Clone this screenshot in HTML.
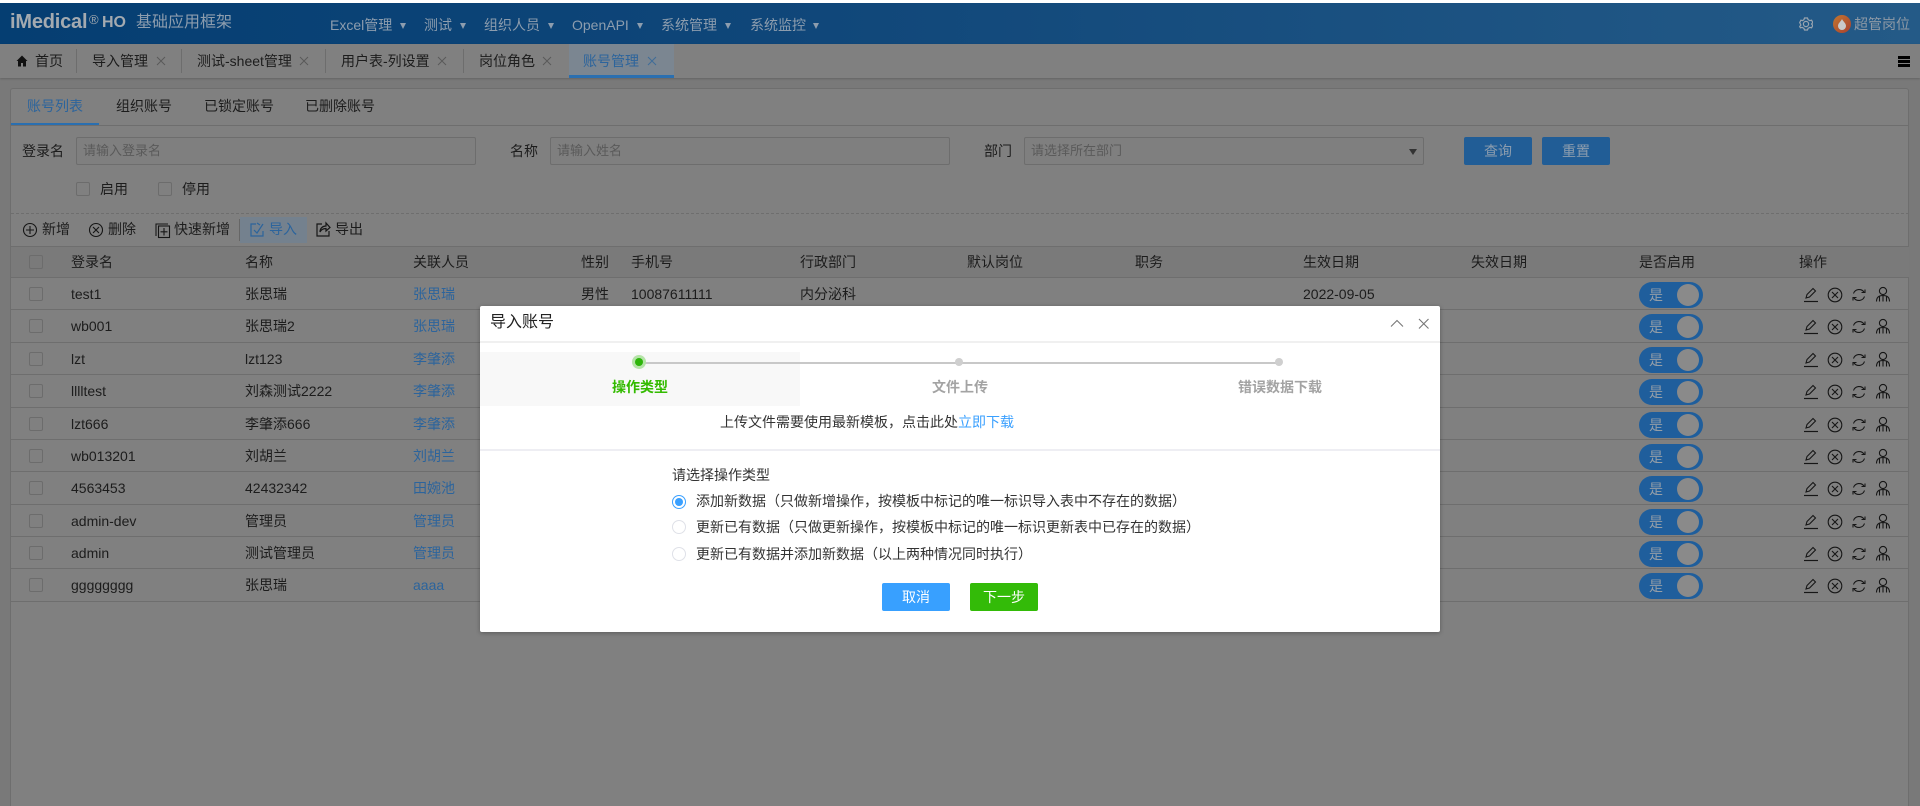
<!DOCTYPE html>
<html lang="zh-CN">
<head>
<meta charset="utf-8">
<title>导入账号</title>
<style>
*{box-sizing:border-box}
html,body{margin:0;padding:0;width:1920px;height:806px;overflow:hidden;background:#797979}
body{position:relative;font:14px/20px "Liberation Sans","Noto Sans CJK SC",sans-serif;color:#1c1c1c}
.t{position:absolute;white-space:nowrap;line-height:20px}
.a{position:absolute}
.strip{position:absolute;left:0;top:0;width:1920px;height:3px;background:#fff}
.top{position:absolute;left:0;top:3px;width:1920px;height:41px;background:linear-gradient(90deg,#053e72 0%,#0f4679 40%,#245a87 100%)}
.m{color:#8d9dae}
.ar{position:absolute;top:23px;width:0;height:0;border-left:3.500px solid transparent;border-right:3.500px solid transparent;border-top:6px solid #8d9dae}
.tabs{position:absolute;left:0;top:44px;width:1920px;height:34px;background:#808080;box-shadow:0 1px 2px rgba(0,0,0,.18)}
.sep{position:absolute;top:5px;width:1px;height:24px;background:#6d6d6d}
.xi{position:absolute;top:12px}
.card{position:absolute;left:10px;top:88px;width:1899px;height:730px;background:#808080;border:1px solid #6e6e6e;border-radius:3px}
.inp{position:absolute;top:137px;height:28px;border:1px solid #6d6d6d;border-radius:2px;background:#7f7f7f;color:#5a5a5a;padding-left:6px;line-height:26px;font-size:13px;white-space:nowrap}
.btn{position:absolute;top:137px;width:68px;height:28px;background:#215d96;border-radius:2px;color:#8d9dae;text-align:center;line-height:28px}
.cb{position:absolute;width:14px;height:14px;border:1px solid #6c6c6c;border-radius:2px}
.row{position:absolute;left:11px;width:1898px;height:33px;border-top:1px solid #6e6e6e;line-height:32px}
.row>span{position:absolute;top:0;white-space:nowrap}
.row>i{position:absolute;left:18px;top:9px;width:14px;height:14px;border:1px solid #6c6c6c;border-radius:2px}
.l{color:#2c649c}
.sw{position:absolute;left:1628px;top:4px;width:64px;height:26px;border-radius:13px;background:#1f5e9c;color:#949ea8;line-height:26px;padding-left:10px}
.sw:after{content:"";position:absolute;left:38px;top:2px;width:22px;height:22px;border-radius:50%;background:#8a8a8a}
.ops{position:absolute;left:1775px;top:6px}
.modal{position:absolute;left:480px;top:306px;width:960px;height:326px;background:#fff;border-radius:2px;box-shadow:0 1px 5px rgba(0,0,0,.3);color:#333}
.modal .t{color:#333}
.rd{position:absolute;left:192px;width:14px;height:14px;border-radius:50%;border:1px solid #dfe1e8;background:#fff}
</style>
</head>
<body>
<svg width="0" height="0" style="position:absolute">
<symbol id="acts" viewBox="0 0 110 22">
<g fill="none" stroke="#161616" stroke-width="1.1">
<path d="M20 14l1-3.500 6-6 2.500 2.500-6 6z"/><path d="M18 17.500h14" stroke-width="1.200"/>
<circle cx="49" cy="11" r="6.800"/><path d="M46 8l6 6M52 8l-6 6"/>
<path d="M67.500 9.500a6 6 0 0 1 10.500-1.500M78.500 12.500a6 6 0 0 1-10.500 1.500"/><path d="M75.500 8.500h3.500v-3M70.500 13.500h-3.500v3"/>
<circle cx="97" cy="7" r="3.600"/><path d="M90.500 17.500c0-4.500 2.500-6 6.500-6s6.500 1.500 6.500 6M93.500 12.500v5M97 11.500v6M100.500 12.500v5"/>
</g></symbol>
<symbol id="xx" viewBox="0 0 10 10"><path d="M1 1l8 8M9 1l-8 8" fill="none" stroke="currentColor" stroke-width="1"/></symbol>
</svg>

<div class="strip"></div>
<div class="top"></div>
<div class="t" style="left:10px;top:12px;font-size:20px;font-weight:bold;color:#a4aab0;letter-spacing:-.2px">iMedical</div>
<div class="t" style="left:89px;top:10px;font-size:13px;color:#a4aab0">®</div>
<div class="t" style="left:102px;top:13px;font-size:16px;font-weight:bold;color:#a4aab0">HO</div>
<div class="t" style="left:136px;top:13px;font-size:16px;color:#8d9dae">基础应用框架</div>
<div class="t m" style="left:330px;top:15px">Excel管理</div><div class="ar" style="left:400px"></div>
<div class="t m" style="left:424px;top:15px">测试</div><div class="ar" style="left:460px"></div>
<div class="t m" style="left:484px;top:15px">组织人员</div><div class="ar" style="left:548px"></div>
<div class="t m" style="left:572px;top:15px">OpenAPI</div><div class="ar" style="left:637px"></div>
<div class="t m" style="left:661px;top:15px">系统管理</div><div class="ar" style="left:725px"></div>
<div class="t m" style="left:750px;top:15px">系统监控</div><div class="ar" style="left:813px"></div>
<svg class="a" style="left:1799px;top:17px" width="14" height="14" viewBox="0 0 14 14" fill="none" stroke="#9aa5b0" stroke-width="1.200"><path d="M5.500 1h3l.6 1.700 1.800.9 1.700-.4 1.200 2.300-1.200 1.500 1.200 1.500-1.200 2.300-1.700-.4-1.800.9-.6 1.700h-3l-.6-1.700-1.800-.9-1.700.4L.7 9.500 1.900 8 .7 5.500l1.200-2.300 1.700.4 1.300-.9z"/><circle cx="7" cy="7" r="2.600"/></svg>
<div class="a" style="left:1833px;top:15px;width:18px;height:18px;border-radius:50%;background:linear-gradient(135deg,#c2762f,#a9402f)"></div>
<svg class="a" style="left:1836px;top:18px" width="12" height="12" viewBox="0 0 12 12"><path d="M6 1c1 2.500 4 4 4 7a4 4 0 0 1-8 0c0-3 3-4.500 4-7z" fill="#c9c9c9"/></svg>
<div class="t" style="left:1854px;top:14px;color:#8f9aa6">超管岗位</div>

<div class="tabs">
<svg class="a" style="left:16px;top:11px" width="12" height="12" viewBox="0 0 12 12"><path d="M6 .5L.5 6H2v5.500h3V8h2v3.500h3V6h1.500z" fill="#111"/></svg>
<div class="t" style="left:35px;top:7px">首页</div><div class="sep" style="left:76px"></div>
<div class="t" style="left:92px;top:7px">导入管理</div><svg class="xi" style="left:156px;color:#5a5a5a" width="10" height="10"><use href="#xx"/></svg><div class="sep" style="left:181px"></div>
<div class="t" style="left:197px;top:7px">测试-sheet管理</div><svg class="xi" style="left:299px;color:#5a5a5a" width="10" height="10"><use href="#xx"/></svg><div class="sep" style="left:325px"></div>
<div class="t" style="left:341px;top:7px">用户表-列设置</div><svg class="xi" style="left:437px;color:#5a5a5a" width="10" height="10"><use href="#xx"/></svg><div class="sep" style="left:463px"></div>
<div class="t" style="left:479px;top:7px">岗位角色</div><svg class="xi" style="left:542px;color:#5a5a5a" width="10" height="10"><use href="#xx"/></svg>
<div class="a" style="left:569px;top:0;width:105px;height:34px;background:#7b8691;border-bottom:3px solid #2a6fb0"></div>
<div class="t" style="left:583px;top:7px;color:#2c649c">账号管理</div><svg class="xi" style="left:647px;color:#3f6d99" width="10" height="10"><use href="#xx"/></svg>
<div class="a" style="left:1898px;top:12px;width:12px;height:2.500px;background:#000"></div>
<div class="a" style="left:1898px;top:16px;width:12px;height:2.500px;background:#000"></div>
<div class="a" style="left:1898px;top:20px;width:12px;height:2.500px;background:#000"></div>
</div>

<div class="card"></div>
<div class="a" style="left:11px;top:125px;width:1898px;height:1px;background:#6e6e6e"></div>
<div class="a" style="left:11px;top:123px;width:88px;height:2px;background:#2a6fb0"></div>
<div class="t" style="left:27px;top:96px;color:#2c649c">账号列表</div>
<div class="t" style="left:116px;top:96px">组织账号</div>
<div class="t" style="left:204px;top:96px">已锁定账号</div>
<div class="t" style="left:305px;top:96px">已删除账号</div>

<div class="t" style="left:22px;top:141px">登录名</div>
<div class="inp" style="left:76px;width:400px">请输入登录名</div>
<div class="t" style="left:510px;top:141px">名称</div>
<div class="inp" style="left:550px;width:400px">请输入姓名</div>
<div class="t" style="left:984px;top:141px">部门</div>
<div class="inp" style="left:1024px;width:400px">请选择所在部门</div>
<div class="a" style="left:1409px;top:149px;border-left:4.500px solid transparent;border-right:4.500px solid transparent;border-top:6px solid #333"></div>
<div class="btn" style="left:1464px">查询</div>
<div class="btn" style="left:1542px">重置</div>
<div class="cb" style="left:76px;top:182px"></div><div class="t" style="left:100px;top:179px">启用</div>
<div class="cb" style="left:158px;top:182px"></div><div class="t" style="left:182px;top:179px">停用</div>
<div class="a" style="left:11px;top:213px;width:1898px;border-top:1px dashed #6e6e6e"></div>

<svg class="a" style="left:22px;top:221px" width="160" height="18" viewBox="0 0 160 18" fill="none" stroke="#161616" stroke-width="1.100">
<circle cx="8" cy="9" r="6.500"/><path d="M8 5v8M4 9h8"/>
<circle cx="74" cy="9" r="6.500"/><path d="M71 6l6 6M77 6l-6 6"/>
<path d="M134 15V3h12"/><rect x="136.500" y="5" width="11" height="11.500"/><path d="M142 7v7.500M138.500 10.800h7"/>
</svg>
<div class="t" style="left:42px;top:219px">新增</div>
<div class="t" style="left:108px;top:219px">删除</div>
<div class="t" style="left:174px;top:219px">快速新增</div>
<div class="a" style="left:239px;top:219px;width:1px;height:22px;background:#666"></div>
<div class="a" style="left:240px;top:217px;width:67px;height:26px;background:#74818e"></div>
<svg class="a" style="left:250px;top:221px" width="15" height="16" viewBox="0 0 15 16" fill="none" stroke="#2c649c" stroke-width="1.200"><path d="M6 3H1v12h12v-5"/><path d="M4 9l3 3 6-9M7 2l3 2"/></svg>
<div class="t" style="left:269px;top:219px;color:#2c649c">导入</div>
<svg class="a" style="left:316px;top:221px" width="15" height="16" viewBox="0 0 15 16" fill="none" stroke="#161616" stroke-width="1.200"><path d="M6 3H1v12h12v-5"/><path d="M4 11c0-4 3-6 6-6V2l4 4.500L10 10V7.500c-3 0-5 1.500-6 3.500z"/></svg>
<div class="t" style="left:335px;top:219px">导出</div>

<div class="a" style="left:11px;top:246px;width:1898px;height:31px;background:#7a7a7a;border-top:1px solid #6e6e6e"></div>
<div class="cb" style="left:29px;top:255px"></div>
<div class="t" style="left:71px;top:252px">登录名</div>
<div class="t" style="left:245px;top:252px">名称</div>
<div class="t" style="left:413px;top:252px">关联人员</div>
<div class="t" style="left:581px;top:252px">性别</div>
<div class="t" style="left:631px;top:252px">手机号</div>
<div class="t" style="left:800px;top:252px">行政部门</div>
<div class="t" style="left:967px;top:252px">默认岗位</div>
<div class="t" style="left:1135px;top:252px">职务</div>
<div class="t" style="left:1303px;top:252px">生效日期</div>
<div class="t" style="left:1471px;top:252px">失效日期</div>
<div class="t" style="left:1639px;top:252px">是否启用</div>
<div class="t" style="left:1799px;top:252px">操作</div>

<div class="row" style="top:277px"><i></i><span style="left:60px">test1</span><span style="left:234px">张思瑞</span><span class="l" style="left:402px">张思瑞</span><span style="left:570px">男性</span><span style="left:620px">10087611111</span><span style="left:789px">内分泌科</span><span style="left:1292px">2022-09-05</span><div class="sw">是</div><svg class="ops" width="110" height="22"><use href="#acts"/></svg></div>
<div class="row" style="top:309px"><i></i><span style="left:60px">wb001</span><span style="left:234px">张思瑞2</span><span class="l" style="left:402px">张思瑞</span><div class="sw">是</div><svg class="ops" width="110" height="22"><use href="#acts"/></svg></div>
<div class="row" style="top:342px"><i></i><span style="left:60px">lzt</span><span style="left:234px">lzt123</span><span class="l" style="left:402px">李肇添</span><div class="sw">是</div><svg class="ops" width="110" height="22"><use href="#acts"/></svg></div>
<div class="row" style="top:374px"><i></i><span style="left:60px">lllltest</span><span style="left:234px">刘森测试2222</span><span class="l" style="left:402px">李肇添</span><div class="sw">是</div><svg class="ops" width="110" height="22"><use href="#acts"/></svg></div>
<div class="row" style="top:407px"><i></i><span style="left:60px">lzt666</span><span style="left:234px">李肇添666</span><span class="l" style="left:402px">李肇添</span><div class="sw">是</div><svg class="ops" width="110" height="22"><use href="#acts"/></svg></div>
<div class="row" style="top:439px"><i></i><span style="left:60px">wb013201</span><span style="left:234px">刘胡兰</span><span class="l" style="left:402px">刘胡兰</span><div class="sw">是</div><svg class="ops" width="110" height="22"><use href="#acts"/></svg></div>
<div class="row" style="top:471px"><i></i><span style="left:60px">4563453</span><span style="left:234px">42432342</span><span class="l" style="left:402px">田婉池</span><div class="sw">是</div><svg class="ops" width="110" height="22"><use href="#acts"/></svg></div>
<div class="row" style="top:504px"><i></i><span style="left:60px">admin-dev</span><span style="left:234px">管理员</span><span class="l" style="left:402px">管理员</span><div class="sw">是</div><svg class="ops" width="110" height="22"><use href="#acts"/></svg></div>
<div class="row" style="top:536px"><i></i><span style="left:60px">admin</span><span style="left:234px">测试管理员</span><span class="l" style="left:402px">管理员</span><div class="sw">是</div><svg class="ops" width="110" height="22"><use href="#acts"/></svg></div>
<div class="row" style="top:568px"><i></i><span style="left:60px">gggggggg</span><span style="left:234px">张思瑞</span><span class="l" style="left:402px">aaaa</span><div class="sw">是</div><svg class="ops" width="110" height="22"><use href="#acts"/></svg></div>
<div class="a" style="left:11px;top:601px;width:1898px;height:1px;background:#6e6e6e"></div>

<div class="modal">
<div class="t" style="left:10px;top:7px;font-size:16px;color:#222">导入账号</div>
<svg class="a" style="left:910px;top:12px" width="40" height="12" viewBox="0 0 40 12" fill="none" stroke="#777" stroke-width="1.100"><path d="M1 8.500L7 2.500l6 6"/><path d="M29 1l9.500 9.500M38.500 1L29 10.500"/></svg>
<div class="a" style="left:0;top:35px;width:960px;height:2px;background:#f0f0f0"></div>
<div class="a" style="left:0;top:46px;width:320px;height:54px;background:#f8f8f8"></div>
<div class="a" style="left:159px;top:56px;width:640px;height:2px;background:#c8c8c8"></div>
<div class="a" style="left:152px;top:49px;width:14px;height:14px;border-radius:50%;background:#b5e4a8"></div>
<div class="a" style="left:155px;top:52px;width:8px;height:8px;border-radius:50%;background:#2db50a"></div>
<div class="a" style="left:475px;top:52px;width:8px;height:8px;border-radius:50%;background:#cfcfcf"></div>
<div class="a" style="left:795px;top:52px;width:8px;height:8px;border-radius:50%;background:#cfcfcf"></div>
<div class="t" style="left:132px;top:71px;font-weight:bold;color:#33bb00">操作类型</div>
<div class="t" style="left:452px;top:71px;font-weight:bold;color:#a3a3a3">文件上传</div>
<div class="t" style="left:758px;top:71px;font-weight:bold;color:#a3a3a3">错误数据下载</div>
<div class="t" style="left:240px;top:106px">上传文件需要使用最新模板，点击此处<span style="color:#3aa0ff">立即下载</span></div>
<div class="a" style="left:0;top:143px;width:960px;height:2px;background:#eeeef3"></div>
<div class="t" style="left:192px;top:159px">请选择操作类型</div>
<div class="rd" style="top:189px;border-color:#3aa0ff"></div><div class="a" style="left:195px;top:192px;width:8px;height:8px;border-radius:50%;background:#3aa0ff"></div>
<div class="t" style="left:216px;top:185px">添加新数据（只做新增操作，按模板中标记的唯一标识导入表中不存在的数据）</div>
<div class="rd" style="top:214px"></div>
<div class="t" style="left:216px;top:211px">更新已有数据（只做更新操作，按模板中标记的唯一标识更新表中已存在的数据）</div>
<div class="rd" style="top:241px"></div>
<div class="t" style="left:216px;top:238px">更新已有数据并添加新数据（以上两种情况同时执行）</div>
<div class="a" style="left:402px;top:277px;width:68px;height:28px;background:#38a0ff;border-radius:2px;color:#fff;text-align:center;line-height:28px">取消</div>
<div class="a" style="left:490px;top:277px;width:68px;height:28px;background:#33bb08;border-radius:2px;color:#fff;text-align:center;line-height:28px">下一步</div>
</div>
</body>
</html>
